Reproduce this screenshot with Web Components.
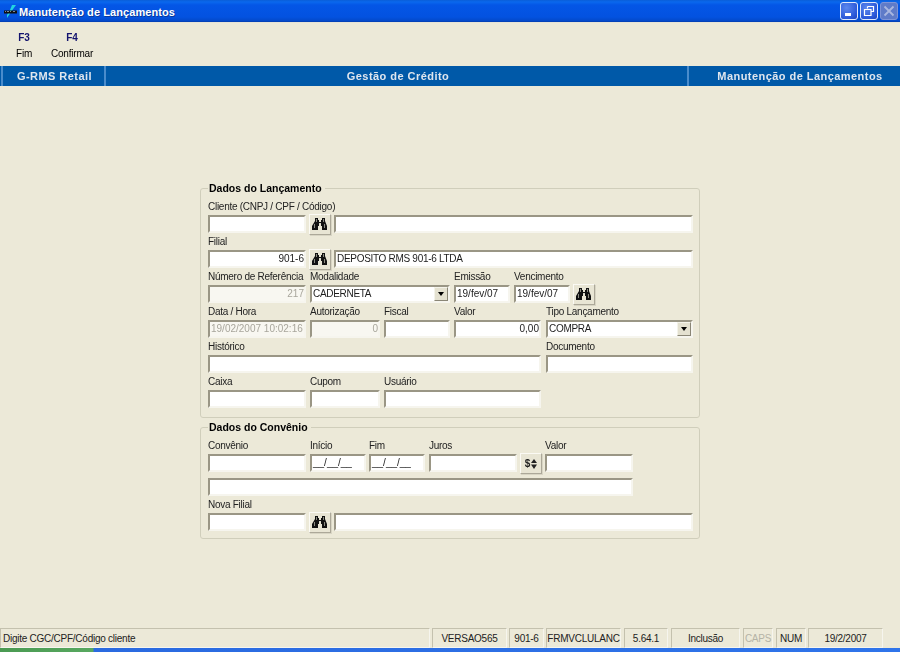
<!DOCTYPE html>
<html lang="pt-BR">
<head>
<meta charset="utf-8">
<title>Manutenção de Lançamentos</title>
<style>
  html, body { margin: 0; height: 100%; }
  body { font: 10px "Liberation Sans", Arial, sans-serif; color: #000; background: #ece9d8; overflow: hidden; }
</style>
</head>
<body>
<app-window>
  <title-bar slot="top">Manutenção de Lançamentos</title-bar>
  <tool-bar slot="top">
    <tool-key name="F3">Fim</tool-key>
    <tool-key name="F4">Confirmar</tool-key>
  </tool-bar>
  <module-band slot="top"></module-band>

  <group-box title="Dados do Lançamento" pad="9">
    <form-row>
      <form-field label="Cliente (CNPJ / CPF / Código)" w="98"><sunken-box></sunken-box></form-field>
      <lookup-button></lookup-button>
      <form-field w="359" style="margin-left:3px"><sunken-box></sunken-box></form-field>
    </form-row>
    <form-row>
      <form-field label="Filial" w="98"><sunken-box align="right">901-6</sunken-box></form-field>
      <lookup-button></lookup-button>
      <form-field w="359" style="margin-left:3px"><sunken-box caps>DEPOSITO RMS 901-6 LTDA</sunken-box></form-field>
    </form-row>
    <form-row>
      <form-field label="Número de Referência" w="98"><sunken-box align="right" off>217</sunken-box></form-field>
      <form-field label="Modalidade" w="140" style="margin-left:4px"><combo-box>CADERNETA</combo-box></form-field>
      <form-field label="Emissão" w="56" style="margin-left:4px"><sunken-box>19/fev/07</sunken-box></form-field>
      <form-field label="Vencimento" w="56" style="margin-left:4px"><sunken-box>19/fev/07</sunken-box></form-field>
      <lookup-button style="margin-left:3px"></lookup-button>
    </form-row>
    <form-row>
      <form-field label="Data / Hora" w="98"><sunken-box off>19/02/2007 10:02:16</sunken-box></form-field>
      <form-field label="Autorização" w="70" style="margin-left:4px"><sunken-box align="right" off>0</sunken-box></form-field>
      <form-field label="Fiscal" w="66" style="margin-left:4px"><sunken-box></sunken-box></form-field>
      <form-field label="Valor" w="87" style="margin-left:4px"><sunken-box align="right">0,00</sunken-box></form-field>
      <form-field label="Tipo Lançamento" w="147" style="margin-left:5px"><combo-box>COMPRA</combo-box></form-field>
    </form-row>
    <form-row>
      <form-field label="Histórico" w="333"><sunken-box></sunken-box></form-field>
      <form-field label="Documento" w="147" style="margin-left:5px"><sunken-box></sunken-box></form-field>
    </form-row>
    <form-row>
      <form-field label="Caixa" w="98"><sunken-box></sunken-box></form-field>
      <form-field label="Cupom" w="70" style="margin-left:4px"><sunken-box></sunken-box></form-field>
      <form-field label="Usuário" w="157" style="margin-left:4px"><sunken-box></sunken-box></form-field>
    </form-row>
  </group-box>

  <group-box title="Dados do Convênio" pad="7" style="margin-top:2px">
    <form-row>
      <form-field label="Convênio" w="98"><sunken-box></sunken-box></form-field>
      <form-field label="Início" w="56" style="margin-left:4px"><sunken-box>__/__/__</sunken-box></form-field>
      <form-field label="Fim" w="56" style="margin-left:3px"><sunken-box>__/__/__</sunken-box></form-field>
      <form-field label="Juros" w="88" style="margin-left:4px"><sunken-box></sunken-box></form-field>
      <lookup-button kind="money"></lookup-button>
      <form-field label="Valor" w="88" style="margin-left:3px"><sunken-box></sunken-box></form-field>
    </form-row>
    <form-row style="margin-top:6px">
      <form-field w="425" bare><sunken-box></sunken-box></form-field>
    </form-row>
    <form-row>
      <form-field label="Nova Filial" w="98"><sunken-box></sunken-box></form-field>
      <lookup-button></lookup-button>
      <form-field w="359" style="margin-left:3px"><sunken-box></sunken-box></form-field>
    </form-row>
  </group-box>

  <status-bar slot="bottom">
    <status-cell grow left>Digite CGC/CPF/Código cliente</status-cell>
    <status-cell w="75" gap="2">VERSAO565</status-cell>
    <status-cell w="35" gap="2">901-6</status-cell>
    <status-cell w="75" gap="3">FRMVCLULANC</status-cell>
    <status-cell w="44" gap="3">5.64.1</status-cell>
    <status-cell w="69" gap="3">Inclusão</status-cell>
    <status-cell w="30" gap="3" off>CAPS</status-cell>
    <status-cell w="30" gap="2">NUM</status-cell>
    <status-cell w="75">19/2/2007</status-cell>
  </status-bar>
</app-window>

<script>
const binoculars = `<svg width="16" height="13" viewBox="0 0 16 13" aria-hidden="true">
  <path fill="#111" d="M3 0h3v2h1v2h2V2h1V0h3v3l2 5v4H10V8H9V6H7v2H6v4H0V8l3-5z"/>
  <path fill="#8a8a80" d="M4 1h1v3H4zM11 1h1v3h-1zM2 6h1v4H2zM12 6h1v4h-1z"/>
  <path fill="#d8d8cc" d="M7 5h2v1H7z"/>
</svg>`;

function define(name, css, html, setup) {
  customElements.define(name, class extends HTMLElement {
    constructor() {
      super();
      this.attachShadow({ mode: "open" }).innerHTML = `<style>${css}</style>${html}`;
    }
    connectedCallback() {
      if (setup) setup(this, this.shadowRoot);
    }
  });
}

define("app-window", `
  :host { display: flex; flex-direction: column; height: 652px; width: 900px; filter: blur(.35px); }
  main { flex: 1; display: flex; flex-direction: column; align-items: flex-start; padding: 95px 0 0 200px; min-height: 0; }
`, `<slot name="top"></slot><main><slot></slot></main><slot name="bottom"></slot>`);

define("title-bar", `
  :host { display: flex; align-items: center; height: 23px; box-sizing: border-box; flex: none; padding: 0 2px 0 3px;
    background: linear-gradient(#0a5ed8 0, #0a68ee 2px, #0456e6 5px, #0352e0 17px, #0348c8 21px, #023aa8 22px, #d8d4c4 22px, #f4f2e8 23px); }
  .logo { width: 16px; height: 16px; flex: none; }
  .text { font: bold 11px "Liberation Sans", Arial, sans-serif; letter-spacing: .08px; color: #fff; flex: 1; white-space: nowrap; text-shadow: 1px 1px 0 #0b3a9a; }
  .btn { width: 18px; height: 18px; box-sizing: border-box; border: 1px solid #dfe8fb; border-radius: 3px; margin-left: 2px; margin-bottom: 2px;
    background: radial-gradient(circle at 35% 30%, #5c88ee, #2a58d8 70%, #1f45bd); display: flex; align-items: center; justify-content: center; }
  .btn.off { border-color: #7f94d6; background: #5f7bc8; }
  svg { display: block; }
`, `
  <svg class="logo" viewBox="0 0 16 16" aria-hidden="true">
    <path d="M9 1 L13 1 L8 8 L4 14 L4 11 L7 6z" fill="#22d4e0"/>
    <rect x="1" y="6.5" width="13" height="3" fill="#111"/>
    <path d="M2 7.5h1M4 7.5h2M7 7.5h1M10 7.5h2" stroke="#9ab" stroke-width=".8"/>
  </svg>
  <div class="text"><slot></slot></div>
  <div class="btn"><svg width="12" height="12" viewBox="0 0 12 12"><rect x="2" y="8" width="6" height="3" fill="#fff"/></svg></div>
  <div class="btn"><svg width="12" height="12" viewBox="0 0 12 12"><path d="M4.500 1.500h6v5h-2M4.500 1.500v2M1.500 4.500h6.500v6h-6.500z" fill="none" stroke="#fff" stroke-width="1.200"/></svg></div>
  <div class="btn off"><svg width="12" height="12" viewBox="0 0 12 12"><path d="M1.500 1.500l9 9M10.500 1.500l-9 9" stroke="#a9b7e0" stroke-width="1.800"/></svg></div>
`);

define("tool-bar", `
  :host { display: flex; height: 43px; flex: none; box-sizing: border-box; }
`, `<slot></slot>`);

define("tool-key", `
  :host { display: flex; flex-direction: column; align-items: center; width: 48px; padding-top: 9px; box-sizing: border-box; }
  .k { font: bold 10px/12px "Liberation Sans", Arial, sans-serif; color: #14146e; }
  .t { font: 10px/12px "Liberation Sans", Arial, sans-serif; letter-spacing: -.2px; margin-top: 4px; white-space: nowrap; }
`, `<div class="k"></div><div class="t"><slot></slot></div>`, (el, root) => {
  root.querySelector(".k").textContent = el.getAttribute("name");
});

define("module-band", `
  :host { display: grid; grid-template-columns: 105px 1fr 213px; height: 20px; flex: none; background: #0059a8; padding-left: 1px; }
  div { display: flex; align-items: center; justify-content: center; font: bold 11px "Liberation Sans", Arial, sans-serif; letter-spacing: .45px; color: #dfe6ee; white-space: nowrap; }
  .a { border-left: 2px solid #4a8ccc; border-right: 2px solid #4a8ccc; padding-left: 2px; }
  .b { padding-left: 3px; }
  .c { border-left: 2px solid #4a8ccc; padding-left: 11px; }
`, `<div class="a">G-RMS Retail</div><div class="b">Gestão de Crédito</div><div class="c">Manutenção de Lançamentos</div>`);

define("group-box", `
  :host { display: block; width: 500px; }
  fieldset { margin: 0; padding: 3px 6px 8px 7px; border: 1px solid #d0cebb; border-radius: 3px; box-sizing: border-box; width: 500px; }
  legend { font: bold 10.500px/14px "Liberation Sans", Arial, sans-serif; padding: 0 3px 0 1px; }
`, `<fieldset><legend></legend><slot></slot></fieldset>`, (el, root) => {
  root.querySelector("legend").textContent = el.getAttribute("title");
  root.querySelector("fieldset").style.paddingBottom = el.getAttribute("pad") + "px";
  el.removeAttribute("title");
});

define("form-row", `
  :host { display: flex; align-items: flex-end; }
`, `<slot></slot>`);

define("form-field", `
  :host { display: flex; flex-direction: column; flex: none; }
  .l { height: 17px; box-sizing: border-box; padding-top: 2px; font: 10px/14px "Liberation Sans", Arial, sans-serif; letter-spacing: -.27px; color: #222; white-space: nowrap; }
`, `<div class="l"></div><slot></slot>`, (el, root) => {
  el.style.width = el.getAttribute("w") + "px";
  const label = root.querySelector(".l");
  if (el.hasAttribute("label")) label.textContent = el.getAttribute("label");
  if (el.hasAttribute("bare")) label.style.display = "none";
});

define("sunken-box", `
  :host { display: block; height: 18px; box-sizing: border-box; border: 2px solid; border-color: #9a9685 #f6f5ee #f6f5ee #9a9685;
    background: #fff; font: 10px/14px "Liberation Sans", Arial, sans-serif; color: #1c1c1c; padding: 0 0 0 1px; white-space: nowrap; overflow: hidden; }
  :host([align=right]) { text-align: right; }
  :host([caps]) { letter-spacing: -.3px; }
  :host([off]) { background: #f8f7f1; color: #a8a69c; }
`, `<slot></slot>`);

define("combo-box", `
  :host { display: flex; height: 18px; box-sizing: border-box; border: 2px solid; border-color: #9a9685 #f6f5ee #f6f5ee #9a9685;
    background: #fff; font: 10px/14px "Liberation Sans", Arial, sans-serif; letter-spacing: -.3px; color: #1c1c1c; white-space: nowrap; }
  .t { flex: 1; padding-left: 1px; overflow: hidden; }
  .a { width: 14px; box-sizing: border-box; border: 1px solid; border-color: #f4f3ea #8a8676 #8a8676 #f4f3ea; background: #e4e1d0; display: flex; align-items: center; justify-content: center; }
  i { width: 0; height: 0; border: 3.500px solid transparent; border-top: 4px solid #000; border-bottom: 0; }
`, `<div class="t"><slot></slot></div><div class="a"><i></i></div>`);

define("lookup-button", `
  :host { display: flex; align-items: center; justify-content: center; flex: none; width: 22px; height: 21px; margin: 0 0 -2px 3px; box-sizing: border-box;
    border: 1px solid; border-color: #fbfaf4 #aca899 #aca899 #fbfaf4; background: #e8e5d4; box-shadow: 1px 1px 0 #d8d5c4; font: bold 10px "Liberation Sans", Arial, sans-serif; color: #222; }
  .m { display: flex; align-items: center; gap: 1px; }
  svg { display: block; }
`, ``, (el, root) => {
  const holder = document.createElement("div");
  holder.className = "m";
  if (el.getAttribute("kind") === "money") {
    holder.innerHTML = `$<svg width="6" height="10" viewBox="0 0 6 10"><path fill="#222" d="M3 0L6 4H0zM0 5.500h6L3 10z"/></svg>`;
  } else {
    holder.innerHTML = binoculars;
  }
  root.appendChild(holder);
});

define("status-bar", `
  :host { display: flex; flex: none; height: 24px; padding: 0 17px 4px 0; box-sizing: border-box;
    background: linear-gradient(90deg, #4a9a52 0, #58a860 93px, #2a6ae0 94px, #2f74ea 100%) bottom / 100% 4px no-repeat, #ece9d8; }
`, `<slot></slot>`);

define("status-cell", `
  :host { display: flex; align-items: center; justify-content: center; flex: none; box-sizing: border-box; height: 20px; border: 1px solid; border-color: #c4c1ae #f6f5ee #f6f5ee #c4c1ae;
    font: 10px "Liberation Sans", Arial, sans-serif; letter-spacing: -.25px; color: #222; white-space: nowrap; }
  :host([grow]) { flex: 1; justify-content: flex-start; padding-left: 2px; margin-right: 2px; }
  :host([off]) { color: #b5b3a6; }
`, `<slot></slot>`, el => {
  if (el.hasAttribute("w")) el.style.width = el.getAttribute("w") + "px";
  if (el.hasAttribute("gap")) el.style.marginRight = el.getAttribute("gap") + "px";
});
</script>
</body>
</html>
